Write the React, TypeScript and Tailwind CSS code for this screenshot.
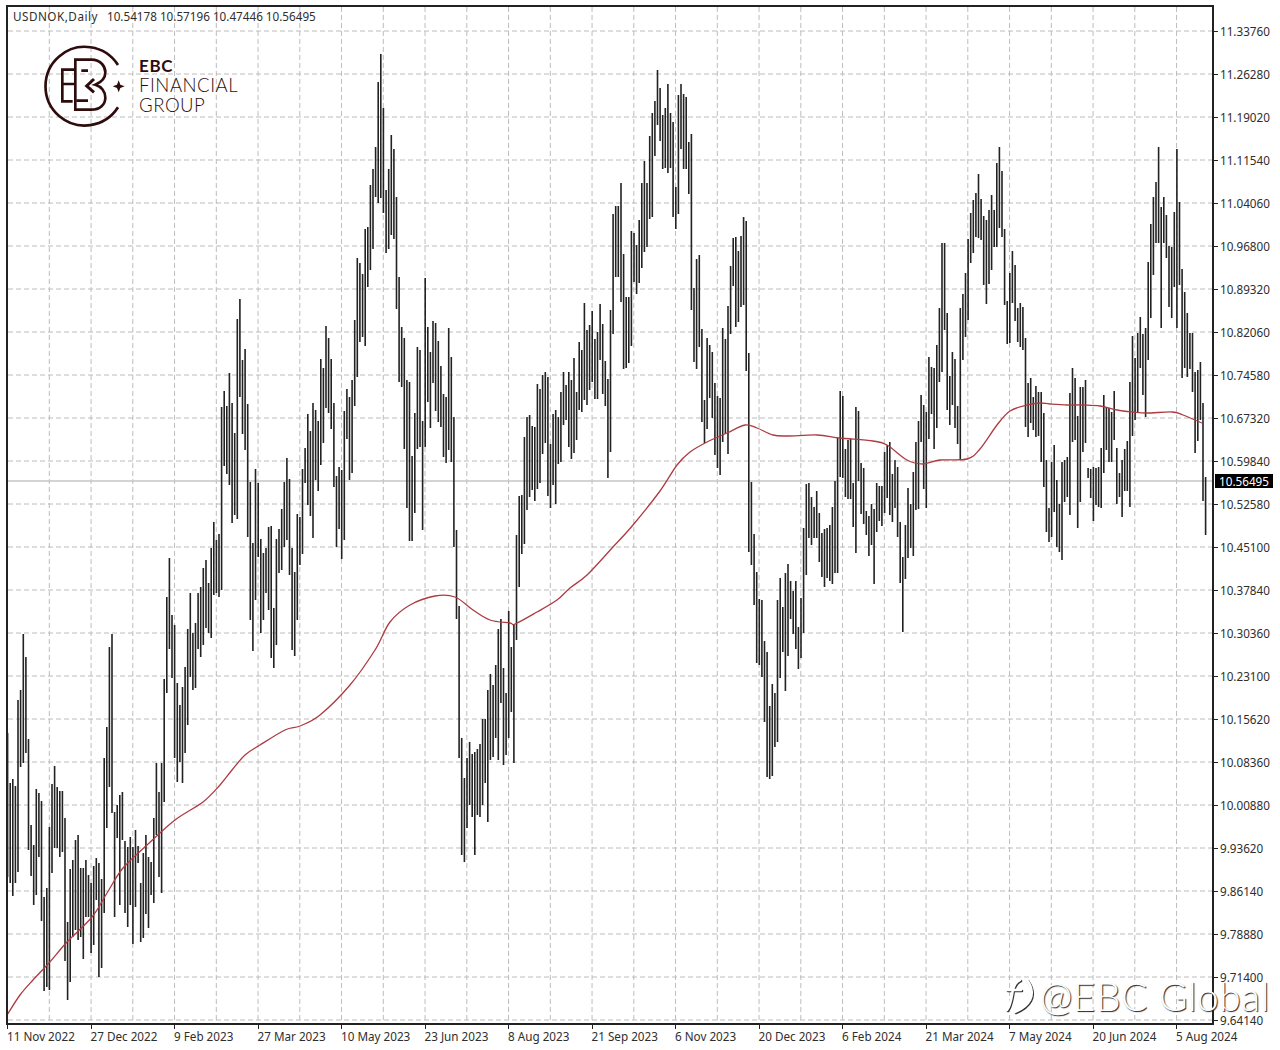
const BARS: number[][] = [
  [733,877],[783,883],[779,896],[786,883],[700,872],[690,767],[634,763],[657,753],[739,850],[825,876],
  [845,905],[789,895],[793,857],[801,921],[897,991],[888,987],[827,990],[784,873],[766,848],[787,848],
  [791,857],[791,852],[818,961],[922,1000],[869,982],[860,937],[840,930],[835,940],[868,937],[868,959],
  [860,917],[875,917],[883,953],[866,945],[858,900],[863,977],[879,968],[758,913],[727,828],[647,787],
  [634,813],[812,917],[805,838],[795,905],[792,840],[841,913],[847,927],[837,905],[847,944],[830,907],
  [846,863],[883,942],[853,938],[835,914],[857,928],[862,895],[818,903],[763,835],[792,877],[763,893],
  [679,802],[597,693],[558,649],[615,678],[625,758],[683,782],[705,762],[687,783],[667,753],[629,725],
  [593,677],[633,690],[623,688],[593,649],[587,657],[568,645],[560,628],[583,633],[548,638],[522,595],
  [540,593],[534,597],[407,590],[391,466],[406,474],[373,485],[403,523],[433,515],[319,519],[299,397],
  [360,434],[349,450],[404,537],[482,620],[543,651],[469,600],[483,557],[539,633],[553,620],[548,593],
  [527,610],[526,658],[608,668],[539,645],[529,573],[509,570],[482,547],[458,540],[479,575],[548,650],
  [572,656],[514,620],[517,565],[469,554],[448,483],[414,505],[431,516],[403,538],[410,480],[421,491],
  [359,465],[368,443],[326,408],[338,413],[359,429],[403,487],[476,547],[467,529],[470,559],[411,540],
  [389,439],[397,480],[380,473],[320,406],[258,377],[263,342],[274,337],[229,346],[227,287],[185,270],
  [169,249],[147,197],[82,203],[54,198],[108,213],[190,253],[169,249],[135,235],[149,239],[197,309],
  [277,382],[327,387],[338,449],[380,508],[382,541],[456,541],[413,513],[347,449],[350,447],[421,530],
  [278,447],[327,402],[352,428],[321,383],[323,411],[341,422],[366,427],[394,457],[397,463],[328,450],
  [357,462],[417,547],[530,619],[606,758],[738,855],[778,862],[758,828],[742,805],[754,817],[752,855],
  [749,815],[744,817],[719,805],[719,783],[690,822],[674,760],[685,757],[665,738],[629,760],[619,703],
  [668,765],[693,755],[611,738],[647,712],[624,763],[535,640],[496,587],[495,554],[437,544],[417,510],
  [415,497],[426,490],[427,501],[384,489],[389,483],[375,454],[372,443],[377,496],[444,508],[414,485],
  [410,504],[417,464],[392,462],[372,425],[385,420],[372,447],[380,459],[358,453],[392,440],[342,410],
  [350,412],[303,400],[330,405],[325,390],[311,382],[339,399],[332,399],[304,360],[324,394],[361,406],
  [379,478],[310,452],[214,334],[206,277],[206,277],[183,302],[254,369],[297,368],[297,363],[231,346],
  [233,282],[245,294],[220,283],[183,268],[161,252],[183,247],[136,219],[113,217],[101,156],[70,125],
  [88,141],[115,169],[108,168],[84,173],[113,168],[122,217],[187,229],[95,214],[84,149],[94,169],
  [97,169],[142,194],[134,310],[288,362],[259,369],[255,347],[329,422],[400,443],[338,429],[345,398],
  [352,418],[383,455],[396,468],[398,475],[328,442],[339,434],[306,454],[266,334],[238,286],[237,327],
  [251,322],[236,307],[217,305],[221,371],[353,552],[482,565],[534,605],[572,663],[599,665],[600,677],
  [641,722],[652,777],[706,779],[684,776],[693,747],[600,742],[578,678],[607,652],[573,691],[564,656],
  [581,619],[591,634],[581,649],[627,669],[598,658],[528,633],[484,575],[483,538],[497,545],[507,538],
  [491,538],[513,562],[533,577],[529,587],[528,578],[525,581],[507,584],[481,573],[438,573],[391,477],
  [396,478],[449,497],[440,499],[439,499],[483,527],[407,553],[411,481],[463,514],[468,524],[511,535],
  [516,556],[504,545],[509,584],[483,532],[486,521],[486,526],[452,513],[445,498],[442,515],[474,522],
  [460,508],[467,537],[522,583],[557,632],[525,579],[488,558],[504,548],[472,556],[442,510],[421,509],
  [395,442],[405,489],[412,508],[357,439],[367,414],[368,449],[345,428],[308,382],[243,372],[243,330],
  [313,410],[376,425],[352,405],[359,428],[406,444],[308,460],[294,360],[273,337],[239,320],[213,263],
  [200,253],[193,237],[174,238],[199,240],[216,285],[220,304],[210,284],[195,270],[210,247],[163,247],
  [147,228],[171,237],[229,305],[301,344],[273,343],[251,303],[265,321],[308,342],[303,347],[307,350],
  [338,427],[383,437],[378,423],[397,430],[386,437],[392,436],[392,462],[413,487],[460,532],[508,542],
  [462,537],[445,512],[480,547],[504,552],[462,560],[460,502],[457,497],[393,515],[368,442],[378,440],
  [416,528],[387,502],[387,452],[380,443],[468,478],[469,498],[467,521],[468,505],[467,507],[448,508],
  [395,473],[407,450],[408,462],[412,462],[391,440],[448,504],[473,497],[460,517],[449,491],[441,491],
  [382,507],[336,436],[358,420],[333,412],[317,368],[334,395],[328,417],[262,360],[224,318],[197,275],
  [182,243],[147,243],[207,328],[197,243],[215,258],[246,307],[247,318],[212,287],[149,328],[202,285],
  [269,378],[292,368],[313,377],[333,369],[333,392],[372,453],[370,441],[362,420],[403,501],[477,535],
]

const MA: number[][] = [[7,1015],[20,995],[33,980],[49,963],[67,942],[92,917],[107,893],[123,868],[147,845],[175,820],[203,802],[220,785],[232,770],[245,755],[260,745],[285,730],[300,726],[320,715],[350,685],[375,650],[390,622],[410,605],[435,596],[455,597],[473,610],[490,620],[510,623],[515,624],[537,612],[557,600],[570,588],[587,575],[613,547],[633,525],[660,491],[677,465],[690,452],[707,442],[727,433],[745,425],[757,428],[773,435],[787,436],[817,435],[840,438],[873,441],[887,445],[907,460],[923,464],[940,460],[967,459],[980,449],[997,425],[1010,411],[1027,405],[1040,403],[1050,404],[1067,405],[1083,405],[1100,406],[1117,410],[1133,412],[1147,413],[1172,412],[1183,415],[1202,423]]

const PRICES = ['11.33760','11.26280','11.19020','11.11540','11.04060','10.96800','10.89320','10.82060','10.74580','10.67320','10.59840','10.52580','10.45100','10.37840','10.30360','10.23100','10.15620','10.08360','10.00880','9.93620','9.86140','9.78880','9.71400','9.64140']
const DATES = ['11 Nov 2022','27 Dec 2022','9 Feb 2023','27 Mar 2023','10 May 2023','23 Jun 2023','8 Aug 2023','21 Sep 2023','6 Nov 2023','20 Dec 2023','6 Feb 2024','21 Mar 2024','7 May 2024','20 Jun 2024','5 Aug 2024']

const barPath = BARS.map(([hi, lo], i) => `M${(7.6 + i * 2.61).toFixed(1)} ${hi}V${lo}`).join('')

// catmull-rom through the sampled points so the average doesn't look polygonal
function smooth(pts: number[][]) {
  let d = `M${pts[0][0]} ${pts[0][1]}`
  for (let i = 0; i < pts.length - 1; i++) {
    const a = pts[i - 1] ?? pts[i]
    const b = pts[i]
    const c = pts[i + 1]
    const e = pts[i + 2] ?? c
    d += `C${(b[0] + (c[0] - a[0]) / 6).toFixed(1)} ${(b[1] + (c[1] - a[1]) / 6).toFixed(1)} ${(c[0] - (e[0] - b[0]) / 6).toFixed(1)} ${(c[1] - (e[1] - b[1]) / 6).toFixed(1)} ${c[0]} ${c[1]}`
  }
  return d
}

function Chart() {
  return (
    <svg width="1204" height="1016" viewBox="8 7 1204 1016" className="block">
      {/* grid */}
      {PRICES.map((_, i) => (
        <line key={i} x1="8" x2="1212" y1={31 + i * 43} y2={31 + i * 43} stroke="#bcbcbc" strokeWidth="1" strokeDasharray="5 3" />
      ))}
      {Array.from({ length: 29 }, (_, i) => 49.3 + i * 41.75).map(x => (
        <line key={x} x1={x} x2={x} y1="7" y2="1023" stroke="#bcbcbc" strokeWidth="1" strokeDasharray="5 3" />
      ))}
      <line x1="8" x2="1212" y1="481" y2="481" stroke="#c6c6c6" strokeWidth="1.4" />
      <path d={barPath} stroke="#222222" strokeWidth="1.6" fill="none" />
      <path d={smooth(MA)} stroke="#ad3b41" strokeWidth="1.3" fill="none" />
    </svg>
  )
}

function Logo() {
  return (
    <div className="absolute left-[38px] top-[39px] flex items-start">
      <svg width="100" height="92" viewBox="0 0 300 276" fill="none" stroke="#2e0c0d" strokeWidth="8">
        <path d="M240 78A118 118 0 1 0 240 205" />
        <path d="M108 92H73V187H104M75 135H108" />
        <path d="M112 212V62H160C190 62 202 84 202 100C202 118 190 130 172 137C190 142 202 158 202 176C202 196 186 212 160 212H112Z" />
        <path d="M130 95H150M115 185H150" />
        <path d="M168 120L146 141L168 160" strokeWidth="9" />
        <path d="M242 124L247 137L260 142L247 147L242 160L237 147L224 142L237 137Z" fill="#2e0c0d" stroke="none" />
      </svg>
      <div className="ml-[1px] mt-[17px] font-['Lato',sans-serif] text-[#2e0c0d]">
        <div className="text-[17px] leading-[19px] font-bold tracking-[0.6px]">EBC</div>
        <div className="text-[18.6px] leading-[20px] font-light tracking-[0.5px]">FINANCIAL</div>
        <div className="text-[18.6px] leading-[20px] font-light tracking-[0.5px]">GROUP</div>
      </div>
    </div>
  )
}

function Watermark() {
  return (
    <div className="absolute left-[1005px] top-[973px] flex items-center">
      <svg width="32" height="46" viewBox="0 0 32 46" fill="none" strokeWidth="2.6" strokeLinecap="round">
        <path d="M15 7C10 9 8 14 7 22C6 28 5 33 2 37M2 17H16M22 7C27 14 28 21 25 27C22 33 15 37 10 39" stroke="#333" transform="translate(1 1)" />
        <path d="M15 7C10 9 8 14 7 22C6 28 5 33 2 37M2 17H16M22 7C27 14 28 21 25 27C22 33 15 37 10 39" stroke="#fff" />
      </svg>
      <span className="ml-[3px] font-['Lato',sans-serif] font-light text-[39px] leading-[46px] tracking-[0.5px] text-white [text-shadow:1px_1px_1px_#222]">@EBC Global</span>
    </div>
  )
}

export default function App() {
  return (
    <div className="relative w-[1280px] h-[1050px] bg-white pl-[6px] pt-[5px] overflow-hidden font-['Noto_Sans',sans-serif] text-[11.7px] text-[#2e2e2e]">
      <div className="flex h-[1020px]">
        <div className="border-2 border-[#222222] w-[1208px] h-[1020px]">
          <Chart />
        </div>
        {/* price axis */}
        <div className="pt-[5px]">
          {PRICES.map(p => (
            <div key={p} className="h-[43px] flex items-center">
              <span className="w-[4px] h-px bg-[#222222]" />
              <span className="ml-[2px] leading-none">{p}</span>
            </div>
          ))}
        </div>
      </div>
      {/* date axis */}
      <div className="flex pl-[1px]">
        {DATES.map(d => (
          <div key={d} className="w-[83.5px] shrink-0 whitespace-nowrap">
            <div className="w-px h-[4px] bg-[#222222]" />
            <div className="leading-[15px]">{d}</div>
          </div>
        ))}
      </div>

      <div className="absolute left-[13px] top-[9px] flex gap-[9px] leading-[15px]">
        <span className="tracking-[0.5px]">USDNOK,Daily</span>
        <span>10.54178 10.57196 10.47446 10.56495</span>
      </div>
      <div className="absolute left-[1215px] top-[474px] w-[58px] h-[14px] bg-black text-white leading-[14px] text-center">10.56495</div>
      <Logo />
      <Watermark />
    </div>
  )
}
